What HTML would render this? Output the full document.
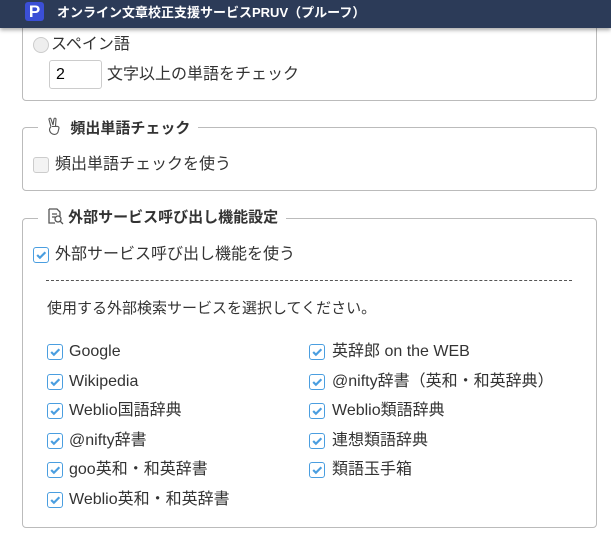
<!DOCTYPE html>
<html><head><meta charset="utf-8"><style>
*{margin:0;padding:0;box-sizing:border-box}
body{width:611px;height:540px;overflow:hidden;background:#fff;position:relative;font-family:"Liberation Sans","Noto Sans CJK JP",sans-serif;color:#333;font-size:16px}
.hdr{position:absolute;left:0;top:0;width:611px;height:28px;background:#2c3b58;box-shadow:0 2px 4px rgba(0,0,0,.35);z-index:5}
.hdr .t{position:absolute;left:57px;top:4px;color:#fff;font-size:13px;font-weight:bold;line-height:18px}
.logo{position:absolute;left:25px;top:2px;width:19px;height:19px;background:#3b4fd6;border-radius:3px;color:#fff;font-weight:bold;font-size:17px;line-height:19px;text-align:center}
.box{position:absolute;left:22px;width:575px;border:1px solid #bbb;border-radius:4px}
.leg{position:absolute;background:#fff;padding:0 8px;font-weight:bold;font-size:15px;line-height:20px;color:#333}
.t{position:absolute;line-height:20px;white-space:nowrap}
.cb{position:absolute;width:16px;height:16px;border:1px solid #4a9ee0;border-radius:3px;background:#fff}
.cb svg{position:absolute;left:1px;top:1px}
.cbe{position:absolute;width:16px;height:16px;border:1px solid #ccc;border-radius:3px;background:#f3f3f3}
</style></head><body>
<div class="hdr"><div class="logo">P</div><div class="t">オンライン文章校正支援サービスPRUV（プルーフ）</div></div>

<div class="box" style="top:10px;height:91px"></div>
<div style="position:absolute;left:33px;top:37px;width:16px;height:16px;border:1px solid #ccc;border-radius:50%;background:#eee"></div>
<div class="t" style="left:51px;top:35px;font-size:16px">スペイン語</div>
<div style="position:absolute;left:49px;top:60px;width:53px;height:29px;border:1px solid #ccc;border-radius:3px"></div>
<div class="t" style="left:56px;top:65px;font-size:16px;color:#000">2</div>
<div class="t" style="left:107px;top:65px;font-size:16px">文字以上の単語をチェック</div>

<div class="box" style="top:127px;height:64px"></div>
<div class="leg" style="left:38px;top:117px"><svg width="16" height="20" viewBox="0 0 16 20" style="vertical-align:-4px" fill="none" stroke="#555" stroke-width="1.1"><path d="M5 10L3 2.5a1 1 0 0 1 2-.5L7 8M7 8l1-6a1 1 0 0 1 2 .3L9.5 9M5 10c-2 1-2 4 0 6 2 2 6 2 7-1l1-4c0-1.5-2-2-3-1.5L9 9.5 6 9.5"/></svg>&nbsp; 頻出単語チェック</div>
<div class="cbe" style="left:33px;top:157px"></div>
<div class="t" style="left:55px;top:155px;font-size:16px">頻出単語チェックを使う</div>

<div class="box" style="top:218px;height:310px"></div>
<div class="leg" style="left:38px;top:207px"><svg width="18" height="18" viewBox="0 0 18 18" style="vertical-align:-3px" fill="none" stroke="#555" stroke-width="1.3"><path d="M3 2h8l3 3v4M3 2v14h6"/><path d="M6 7h5M6 10h3"/><circle cx="12" cy="12" r="3"/><path d="M14 14l3 3"/></svg>&nbsp;外部サービス呼び出し機能設定</div>
<div class="cb" style="left:33px;top:247px"><svg width="12" height="12" viewBox="0 0 11 11"><path d="M2 5.5l2.5 2.5 5-5" stroke="#4a9ee0" stroke-width="2" fill="none"/></svg></div>
<div class="t" style="left:55px;top:245px;font-size:16px">外部サービス呼び出し機能を使う</div>
<div style="position:absolute;left:46px;top:280px;width:526px;border-top:1px dashed #555"></div>
<div class="t" style="left:47px;top:299px;font-size:15px">使用する外部検索サービスを選択してください。</div>

<div class="cb" style="left:47px;top:344px"><svg width="12" height="12" viewBox="0 0 11 11"><path d="M2 5.5l2.5 2.5 5-5" stroke="#4a9ee0" stroke-width="2" fill="none"/></svg></div><div class="t" style="left:69px;top:342px">Google</div>
<div class="cb" style="left:47px;top:374px"><svg width="12" height="12" viewBox="0 0 11 11"><path d="M2 5.5l2.5 2.5 5-5" stroke="#4a9ee0" stroke-width="2" fill="none"/></svg></div><div class="t" style="left:69px;top:372px">Wikipedia</div>
<div class="cb" style="left:47px;top:403px"><svg width="12" height="12" viewBox="0 0 11 11"><path d="M2 5.5l2.5 2.5 5-5" stroke="#4a9ee0" stroke-width="2" fill="none"/></svg></div><div class="t" style="left:69px;top:401px">Weblio国語辞典</div>
<div class="cb" style="left:47px;top:433px"><svg width="12" height="12" viewBox="0 0 11 11"><path d="M2 5.5l2.5 2.5 5-5" stroke="#4a9ee0" stroke-width="2" fill="none"/></svg></div><div class="t" style="left:69px;top:431px">@nifty辞書</div>
<div class="cb" style="left:47px;top:462px"><svg width="12" height="12" viewBox="0 0 11 11"><path d="M2 5.5l2.5 2.5 5-5" stroke="#4a9ee0" stroke-width="2" fill="none"/></svg></div><div class="t" style="left:69px;top:460px">goo英和・和英辞書</div>
<div class="cb" style="left:47px;top:492px"><svg width="12" height="12" viewBox="0 0 11 11"><path d="M2 5.5l2.5 2.5 5-5" stroke="#4a9ee0" stroke-width="2" fill="none"/></svg></div><div class="t" style="left:69px;top:490px">Weblio英和・和英辞書</div>

<div class="cb" style="left:309px;top:344px"><svg width="12" height="12" viewBox="0 0 11 11"><path d="M2 5.5l2.5 2.5 5-5" stroke="#4a9ee0" stroke-width="2" fill="none"/></svg></div><div class="t" style="left:332px;top:342px">英辞郎 on the WEB</div>
<div class="cb" style="left:309px;top:374px"><svg width="12" height="12" viewBox="0 0 11 11"><path d="M2 5.5l2.5 2.5 5-5" stroke="#4a9ee0" stroke-width="2" fill="none"/></svg></div><div class="t" style="left:332px;top:372px">@nifty辞書（英和・和英辞典）</div>
<div class="cb" style="left:309px;top:403px"><svg width="12" height="12" viewBox="0 0 11 11"><path d="M2 5.5l2.5 2.5 5-5" stroke="#4a9ee0" stroke-width="2" fill="none"/></svg></div><div class="t" style="left:332px;top:401px">Weblio類語辞典</div>
<div class="cb" style="left:309px;top:433px"><svg width="12" height="12" viewBox="0 0 11 11"><path d="M2 5.5l2.5 2.5 5-5" stroke="#4a9ee0" stroke-width="2" fill="none"/></svg></div><div class="t" style="left:332px;top:431px">連想類語辞典</div>
<div class="cb" style="left:309px;top:462px"><svg width="12" height="12" viewBox="0 0 11 11"><path d="M2 5.5l2.5 2.5 5-5" stroke="#4a9ee0" stroke-width="2" fill="none"/></svg></div><div class="t" style="left:332px;top:460px">類語玉手箱</div>
</body></html>
